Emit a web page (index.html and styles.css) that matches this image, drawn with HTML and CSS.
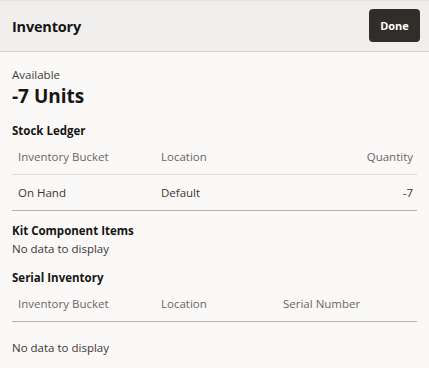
FILE: index.html
```html
<!DOCTYPE html>
<html>
<head>
<meta charset="utf-8">
<link rel="stylesheet" href="styles.css">
</head>
<body>
<div class="page">
  <header class="header">
    <h1 class="title">Inventory</h1>
    <button class="done">Done</button>
  </header>
  <main class="content">
    <div class="avail">
      <div class="avail-label">Available</div>
      <div class="avail-value">-7 Units</div>
    </div>

    <section class="section ledger">
      <h2 class="sec-title">Stock Ledger</h2>
      <div class="table">
        <div class="row head">
          <div class="c1">Inventory Bucket</div>
          <div class="c2">Location</div>
          <div class="c3 right">Quantity</div>
        </div>
        <div class="row body-row">
          <div class="c1">On Hand</div>
          <div class="c2">Default</div>
          <div class="c3 right">-7</div>
        </div>
      </div>
    </section>

    <section class="section kit">
      <h2 class="sec-title">Kit Component Items</h2>
      <div class="nodata-plain">No data to display</div>
    </section>

    <section class="section serial">
      <h2 class="sec-title">Serial Inventory</h2>
      <div class="table">
        <div class="row head head-dark">
          <div class="c1">Inventory Bucket</div>
          <div class="c2">Location</div>
          <div class="c3">Serial Number</div>
        </div>
      </div>
      <div class="nodata">No data to display</div>
    </section>
  </main>
</div>
</body>
</html>
```

FILE: styles.css
```css
* { box-sizing: border-box; }
html, body { margin: 0; padding: 0; }
body {
  background: #fbf9f8;
  font-family: "Open Sans", "Noto Sans", sans-serif;
  color: #161513;
  width: 429px;
  height: 368px;
  overflow: hidden;
}
.page { display: flex; flex-direction: column; }
.header {
  height: 52px;
  background: #f1efed;
  border-top: 1px solid #e6e4e2;
  border-bottom: 1px solid #d3d1cf;
  display: flex;
  align-items: center;
  justify-content: space-between;
  padding: 0 9px 0 12px;
}
.title {
  margin: 0;
  font-size: 14.5px;
  font-weight: 700;
  letter-spacing: -0.2px;
}
.done {
  width: 51px;
  height: 33px;
  margin-top: -1px;
  background: #312d2a;
  color: #fff;
  border: none;
  border-radius: 4px;
  font-family: inherit;
  font-size: 11px;
  font-weight: 700;
  padding: 0;
}
.content { padding: 16px 12px 0 12px; }
.avail-label { font-size: 11.5px; color: #3f3b38; line-height: 16px; margin-top: -1px; }
.avail-value { font-size: 19px; font-weight: 700; line-height: 24px; margin-top: 1px; }
.section { margin-top: 12px; }
.ledger { margin-top: 15px; }
.sec-title { margin: 0; font-size: 11.5px; font-weight: 700; line-height: 16px; }
.table { display: flex; flex-direction: column; }
.row {
  display: grid;
  grid-template-columns: 143px 122px 1fr;
  font-size: 11.5px;
  padding: 0 4px 0 6px;
  align-items: center;
}
.head { height: 36px; color: #6a6562; border-bottom: 1px solid #dedcda; }
.body-row { height: 36px; color: #3a3633; border-bottom: 1px solid #b5b3b1; }
.head-dark { border-bottom-color: #b5b3b1; }
.right { text-align: right; }
.kit { margin-top: 12px; }
.nodata-plain { font-size: 11.5px; color: #3a3633; line-height: 16px; margin-top: 2px; }
.serial { margin-top: 13px; }
.nodata { font-size: 11.5px; color: #3a3633; line-height: 16px; margin-top: 18px; padding-left: 0; }
```
